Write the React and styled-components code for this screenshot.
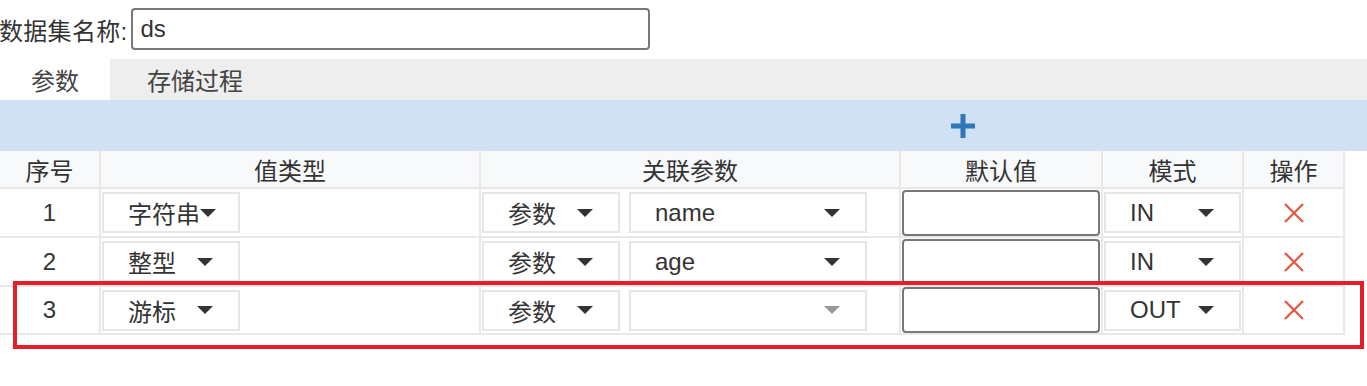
import React from 'react';
import styled, { createGlobalStyle } from 'styled-components';

const GlobalStyle = createGlobalStyle`
   html, body {
      margin: 0;
      padding: 0;
      background: #fff;
   }
   body {
      font-family: "Liberation Sans", "Noto Sans CJK SC", sans-serif;
      font-size: 24px;
      color: #333;
   }
`;

const rows = [
   { id: 1, type: '字符串', src: '参数', param: 'name', mode: 'IN' },
   { id: 2, type: '整型', src: '参数', param: 'age', mode: 'IN' },
   { id: 3, type: '游标', src: '参数', param: '', mode: 'OUT', empty: true },
];

const columns = ['序号', '值类型', '关联参数', '默认值', '模式', '操作'];

const Select = ({ value, width, disabled }) => (
   <SelectBox $width={width}>
      <span className="value">{value}</span>
      <Caret $disabled={disabled} />
   </SelectBox>
);

const CloseIcon = () => (
   <svg width="22" height="22" viewBox="0 0 22 22">
      <path d="M2 2 L20 20 M20 2 L2 20" stroke="#e4573d" strokeWidth="2.2" fill="none" />
   </svg>
);

const PlusIcon = () => (
   <svg width="26" height="26" viewBox="0 0 26 26">
      <path d="M13 1 V25 M1 13 H25" stroke="#2f77b8" strokeWidth="5" fill="none" />
   </svg>
);

const App = () => {
   return (
      <Page>
         <GlobalStyle />
         <NameRow>
            <Label>数据集名称:</Label>
            <NameInput>ds</NameInput>
         </NameRow>

         <Tabs>
            <Tab $active>参数</Tab>
            <Tab>存储过程</Tab>
         </Tabs>

         <AddBar>
            <PlusIcon />
         </AddBar>

         <TableWrap>
            <Grid>
               {columns.map(c => (
                  <HeadCell key={c}>{c}</HeadCell>
               ))}
               {rows.map(r => (
                  <React.Fragment key={r.id}>
                     <Cell $center>{r.id}</Cell>
                     <Cell>
                        <Select value={r.type} width={138} />
                     </Cell>
                     <Cell $gap>
                        <Select value={r.src} width={138} />
                        <Select value={r.param} width={238} disabled={r.empty} />
                     </Cell>
                     <Cell>
                        <TextInput />
                     </Cell>
                     <Cell>
                        <Select value={r.mode} />
                     </Cell>
                     <Cell $center>
                        <CloseIcon />
                     </Cell>
                  </React.Fragment>
               ))}
            </Grid>
            <Highlight />
         </TableWrap>
      </Page>
   );
};

export default App;

const Page = styled.div`
   width: 1367px;
   padding: 8px 0 40px;
`;

const NameRow = styled.div`
   display: flex;
   align-items: center;
   height: 42px;
`;

const Label = styled.label`
   margin-left: -1px;
   margin-right: 4px;
   white-space: nowrap;
   letter-spacing: 0.3px;
`;

const NameInput = styled.div`
   box-sizing: border-box;
   width: 519px;
   height: 42px;
   border: 2px solid #777;
   border-radius: 4px;
   padding-left: 7px;
   display: flex;
   align-items: center;
`;

const Tabs = styled.div`
   display: flex;
   margin-top: 9px;
   height: 41px;
   background: #eeeeee;
`;

const Tab = styled.div`
   display: flex;
   align-items: center;
   padding: 0 0 0 ${props => (props.$active ? '31px' : '37px')};
   width: ${props => (props.$active ? '110px' : 'auto')};
   box-sizing: border-box;
   background: ${props => (props.$active ? '#fff' : 'transparent')};
   color: #444;
`;

const AddBar = styled.div`
   height: 51px;
   background: #cfe1f2;
   display: flex;
   align-items: center;
   padding-left: 950px;
`;

const TableWrap = styled.div`
   position: relative;
   width: 1345px;
`;

const Grid = styled.div`
   display: grid;
   grid-template-columns: 99px 378px 418px 200px 139px 99px;
   grid-template-rows: 36px 47px 47px 46px;
   gap: 2px;
   padding: 0 2px 2px 0;
   background: #e8e8e8;
`;

const HeadCell = styled.div`
   background: #f8f9fa;
   display: flex;
   align-items: center;
   justify-content: center;
   color: #333;
`;

const Cell = styled.div`
   background: #fff;
   display: flex;
   align-items: center;
   justify-content: ${props => (props.$center ? 'center' : 'flex-start')};
   gap: ${props => (props.$gap ? '9px' : '0')};
   padding: 0 1px;
   color: #333;
`;

const SelectBox = styled.div`
   box-sizing: border-box;
   height: 41px;
   width: ${props => (props.$width ? `${props.$width}px` : '100%')};
   border: 2px solid #e6e6e6;
   display: flex;
   align-items: center;
   justify-content: space-between;
   padding: 0 25px 0 24px;

   .value {
      white-space: nowrap;
   }
`;

const Caret = styled.span`
   width: 0;
   height: 0;
   flex-shrink: 0;
   border-left: 8px solid transparent;
   border-right: 8px solid transparent;
   border-top: 8px solid ${props => (props.$disabled ? '#999' : '#333')};
`;

const TextInput = styled.div`
   box-sizing: border-box;
   width: 100%;
   height: 46px;
   border: 2px solid #777;
   border-radius: 4px;
   background: #fff;
`;

const Highlight = styled.div`
   position: absolute;
   left: 13px;
   top: 130px;
   width: 1351px;
   height: 68px;
   box-sizing: border-box;
   border: 4px solid #e41f28;
   pointer-events: none;
`;
